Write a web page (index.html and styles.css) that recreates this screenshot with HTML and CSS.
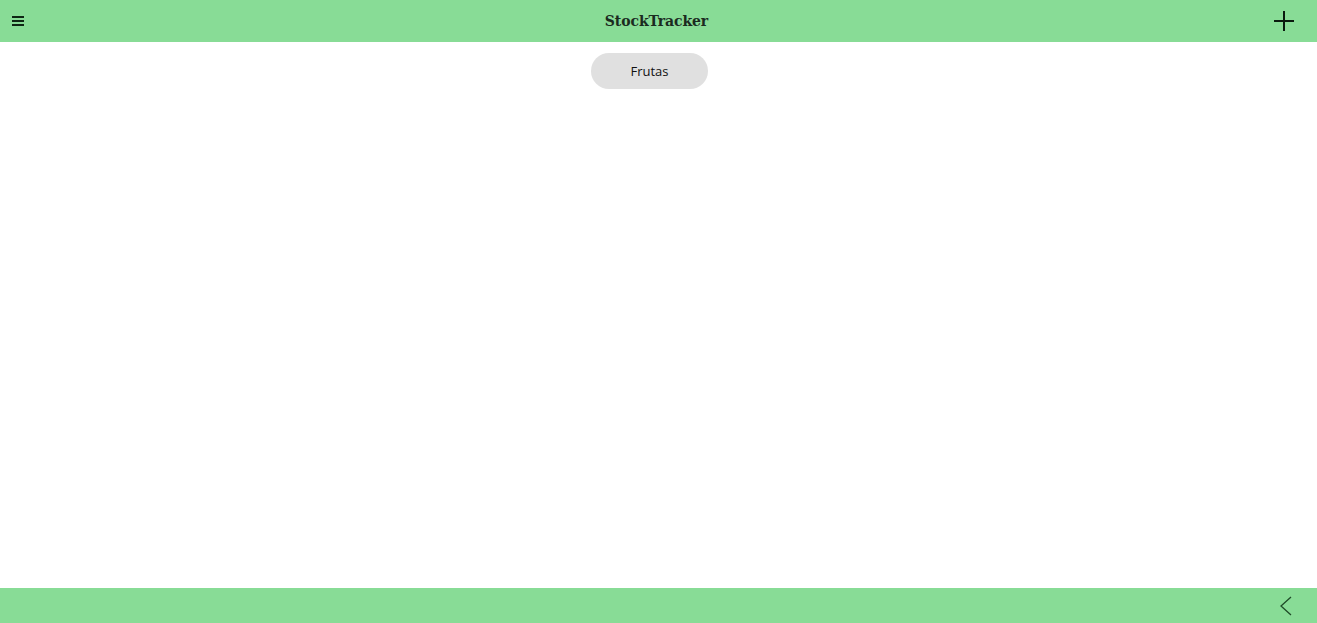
FILE: index.html
```html
<!DOCTYPE html>
<html lang="es">
<head>
<meta charset="utf-8">
<title>StockTracker</title>
<link rel="stylesheet" href="styles.css">
</head>
<body>
<div class="app">
  <header class="topbar">
    <button class="icon-btn menu" aria-label="Menú">
      <svg width="12" height="10" viewBox="0 0 12 10"><rect x="0" y="0" width="12" height="2" fill="#0f2614"/><rect x="0" y="4" width="12" height="2" fill="#0f2614"/><rect x="0" y="8" width="12" height="2" fill="#0f2614"/></svg>
    </button>
    <h1 class="title">StockTracker</h1>
    <button class="icon-btn add" aria-label="Añadir">
      <svg width="20" height="20" viewBox="0 0 20 20"><path d="M10 0V20M0 10H20" stroke="#0a1a0e" stroke-width="2" fill="none"/></svg>
    </button>
  </header>
  <main class="content">
    <div class="chips">
      <span class="chip">Frutas</span>
    </div>
  </main>
  <footer class="bottombar">
    <button class="icon-btn back" aria-label="Atrás">
      <svg width="14" height="20" viewBox="0 0 14 20"><path d="M12 1L2 10L12 19" stroke="#1f4a28" stroke-width="1.3" fill="none"/></svg>
    </button>
  </footer>
</div>
</body>
</html>
```
FILE: styles.css
```css
* { box-sizing: border-box; }
html, body { margin: 0; padding: 0; height: 100%; }
body { background: #fff; font-family: "Open Sans", "Noto Sans", sans-serif; }
.app { display: flex; flex-direction: column; height: 623px; }
.topbar {
  height: 42px; background: #88dc96;
  display: flex; align-items: center; justify-content: space-between;
  padding: 0 23px 0 12px; position: relative;
}
.icon-btn { background: none; border: 0; padding: 0; display: flex; align-items: center; justify-content: center; cursor: pointer; }
.menu { width: 12px; height: 10px; margin-top: -1px; }
.add { width: 20px; height: 20px; }
.title {
  position: absolute; left: 0; right: 0; top: 0; height: 42px; margin: 0;
  display: flex; align-items: center; justify-content: center;
  font-family: "DejaVu Serif", serif; font-weight: bold; font-size: 14px;
  color: #1b2b1f; padding-right: 4px; pointer-events: none; letter-spacing: -0.1px;
}
.content { flex: 1; }
.chips { display: flex; justify-content: center; padding-top: 11px; padding-right: 18px; }
.chip {
  width: 117px; height: 36px; border-radius: 18px; background: #e0e0e0;
  display: flex; align-items: center; justify-content: center;
  font-size: 13px; color: #111;
}
.bottombar {
  height: 35px; background: #88dc96;
  display: flex; align-items: center; justify-content: flex-end;
  padding-right: 24px;
}
.back { width: 14px; height: 20px; }
```
